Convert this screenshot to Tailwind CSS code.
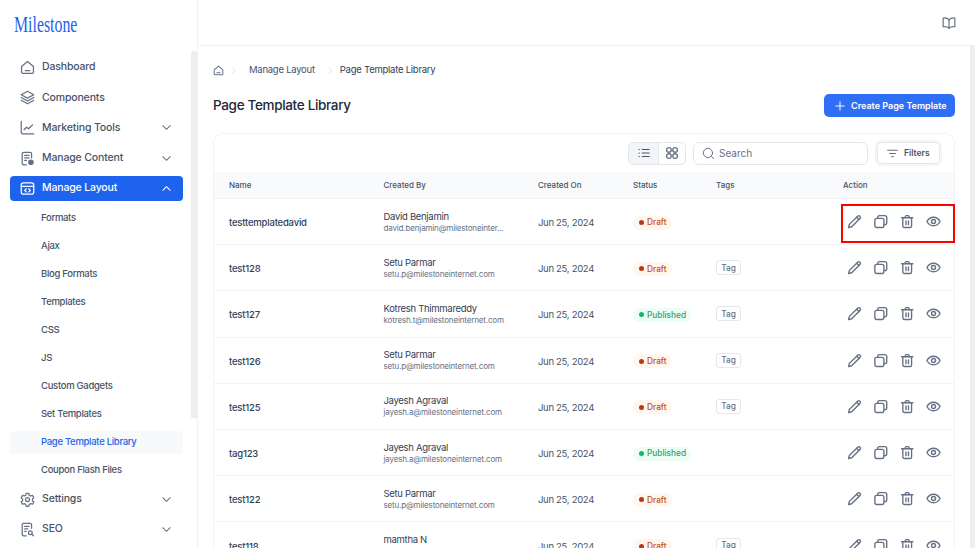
<!DOCTYPE html>
<html lang="en">
<head>
  <meta charset="UTF-8" />
  <title>Page Template Library</title>
  <script src="https://cdn.jsdelivr.net/npm/@tailwindcss/browser@4"></script>
</head>
<body class="h-[548px] overflow-hidden bg-white font-['Inter',sans-serif] text-[#344054]">
  <!-- shared icons -->
  <svg class="hidden">
    <symbol id="i-edit" viewBox="0 0 24 24" fill="none" stroke="currentColor" stroke-width="2.2" stroke-linejoin="round" stroke-linecap="round"><path d="M17.500 3.200a2.600 2.600 0 0 1 3.600 3.600L7.600 20.400 2.600 21.600l1.200-5z"/><path d="M15.500 5.200l3.600 3.600"/></symbol>
    <symbol id="i-copy" viewBox="0 0 24 24" fill="none" stroke="currentColor" stroke-width="2.2" stroke-linejoin="round" stroke-linecap="round"><rect x="2.500" y="7" width="14.500" height="14.500" rx="3"/><path d="M7 7V5.500a3 3 0 0 1 3-3h8.500a3 3 0 0 1 3 3V14a3 3 0 0 1-3 3H17"/></symbol>
    <symbol id="i-trash" viewBox="0 0 24 24" fill="none" stroke="currentColor" stroke-width="2.2" stroke-linejoin="round" stroke-linecap="round"><path d="M3 6h18"/><path d="M9 6V4a1.500 1.500 0 0 1 1.500-1.500h3A1.500 1.500 0 0 1 15 4v2"/><path d="M5 6v13a2.500 2.500 0 0 0 2.500 2.500h9A2.500 2.500 0 0 0 19 19V6"/><path d="M10 11v6M14 11v6"/></symbol>
    <symbol id="i-eye" viewBox="0 0 24 24" fill="none" stroke="currentColor" stroke-width="2.2" stroke-linejoin="round" stroke-linecap="round"><path d="M1.500 12C4 7.500 7.500 5.200 12 5.200s8 2.300 10.500 6.800c-2.500 4.500-6 6.800-10.500 6.800S4 16.500 1.500 12z"/><circle cx="12" cy="12" r="3.200"/></symbol>
    <symbol id="i-down" viewBox="0 0 12 12" fill="none" stroke="currentColor" stroke-width="1.100" stroke-linecap="round" stroke-linejoin="round"><path d="M2 4l4 4 4-4"/></symbol>
    <symbol id="i-crumb" viewBox="0 0 12 12" fill="none" stroke="currentColor" stroke-width="1" stroke-linecap="round" stroke-linejoin="round"><path d="M4 2l4 4-4 4"/></symbol>
    <symbol id="i-actions" viewBox="0 0 94 15"><use href="#i-edit" x="0" width="15" height="15"/><use href="#i-copy" x="26.300" width="15" height="15"/><use href="#i-trash" x="52.700" width="15" height="15"/><use href="#i-eye" x="79" width="15" height="15"/></symbol>
  </svg>

  <div class="flex h-full">
    <!-- sidebar -->
    <aside class="relative w-[198px] shrink-0 overflow-hidden border-r border-[#f0f1f3]">
      <div class="h-[52px] pl-[14px] pt-[9px]">
        <span class="inline-block origin-left scale-x-[0.66] font-['Liberation_Serif',serif] text-[24px] leading-[30px] text-[#1d63ed]">Milestone</span>
      </div>
      <div class="absolute right-0 top-[51px] h-[367px] w-[6px] rounded-t-[3px] bg-[#eceef2]"></div>
      <nav class="w-[183px] pl-[10px] text-[10.500px] font-medium tracking-[-0.15px] text-[#475467]">
        <a class="flex h-[30.400px] items-center gap-[7px] pl-[10px]">
          <svg class="size-[15px]" viewBox="0 0 24 24" fill="none" stroke="#667085" stroke-width="2" stroke-linejoin="round" stroke-linecap="round"><path d="M2.500 10.500 12 2.500l9.500 8V19a2.500 2.500 0 0 1-2.500 2.500H5A2.500 2.500 0 0 1 2.500 19z"/><path d="M8.500 17h7"/></svg>
          Dashboard
        </a>
        <a class="flex h-[30.400px] items-center gap-[7px] pl-[10px]">
          <svg class="size-[15px]" viewBox="0 0 24 24" fill="none" stroke="#667085" stroke-width="2" stroke-linejoin="round" stroke-linecap="round"><path d="M12 2 2 7.500 12 13l10-5.500z"/><path d="M2 12l10 5.500L22 12"/><path d="M2 16.500 12 22l10-5.500"/></svg>
          Components
        </a>
        <a class="flex h-[30.400px] items-center gap-[7px] pl-[10px] pr-[11px]">
          <svg class="size-[15px]" viewBox="0 0 24 24" fill="none" stroke="#667085" stroke-width="2" stroke-linejoin="round" stroke-linecap="round"><path d="M2 2v17a3 3 0 0 0 3 3h17"/><path d="M6.500 15.500l4-4 3 2.500 6.500-6"/></svg>
          Marketing Tools
          <svg class="ml-auto size-[11px] text-[#667085]"><use href="#i-down"/></svg>
        </a>
        <a class="flex h-[30.400px] items-center gap-[7px] pl-[10px] pr-[11px]">
          <svg class="size-[15px]" viewBox="0 0 24 24" fill="none" stroke="#667085" stroke-width="2" stroke-linejoin="round" stroke-linecap="round"><path d="M10 22H6a2.500 2.500 0 0 1-2.500-2.500v-15A2.500 2.500 0 0 1 6 2h10a2.500 2.500 0 0 1 2.500 2.500V11"/><path d="M7.500 7h7M7.500 11h7M7.500 15h3"/><circle cx="17.500" cy="18" r="3.500" fill="#667085"/></svg>
          Manage Content
          <svg class="ml-auto size-[11px] text-[#667085]"><use href="#i-down"/></svg>
        </a>
        <a class="mb-[3.500px] mt-[2px] flex h-[25px] items-center gap-[7px] rounded-[4px] bg-[#1d63ed] pl-[10px] pr-[11px] text-white">
          <svg class="size-[15px]" viewBox="0 0 24 24" fill="none" stroke="#fff" stroke-width="2" stroke-linejoin="round" stroke-linecap="round"><rect x="2" y="3" width="20" height="18" rx="3.500"/><path d="M2 8.500h20"/><path d="M10 12.500l-2.500 2.500 2.500 2.500M14 12.500l2.500 2.500-2.500 2.500"/></svg>
          Manage Layout
          <svg class="ml-auto size-[11px] rotate-180 text-white"><use href="#i-down"/></svg>
        </a>
        <div class="text-[9.500px] tracking-[-0.3px]">
          <a class="flex h-[28px] items-center pl-[31px]">Formats</a>
          <a class="flex h-[28px] items-center pl-[31px]">Ajax</a>
          <a class="flex h-[28px] items-center pl-[31px]">Blog Formats</a>
          <a class="flex h-[28px] items-center pl-[31px]">Templates</a>
          <a class="flex h-[28px] items-center pl-[31px]">CSS</a>
          <a class="flex h-[28px] items-center pl-[31px]">JS</a>
          <a class="flex h-[28px] items-center pl-[31px]">Custom Gadgets</a>
          <a class="flex h-[28px] items-center pl-[31px]">Set Templates</a>
          <a class="my-[2.500px] flex h-[23px] items-center rounded-[4px] bg-[#f8f9fb] pl-[31px] text-[#1d63ed]">Page Template Library</a>
          <a class="flex h-[28px] items-center pl-[31px]">Coupon Flash Files</a>
        </div>
        <a class="flex h-[30px] items-center gap-[7px] pl-[10px] pr-[11px]">
          <svg class="size-[15px]" viewBox="0 0 24 24" fill="none" stroke="#667085" stroke-width="2" stroke-linejoin="round" stroke-linecap="round"><circle cx="12" cy="12" r="3.200"/><path d="M10 2h4l.7 3 2.400 1.400 3-.9 2 3.500-2.200 2.100v2.800l2.200 2.100-2 3.500-3-.9-2.400 1.400-.7 3h-4l-.7-3-2.400-1.400-3 .9-2-3.500 2.200-2.100v-2.800L1.900 9l2-3.500 3 .9L9.300 5z"/></svg>
          Settings
          <svg class="ml-auto size-[11px] text-[#667085]"><use href="#i-down"/></svg>
        </a>
        <a class="flex h-[30px] items-center gap-[7px] pl-[10px] pr-[11px]">
          <svg class="size-[15px]" viewBox="0 0 24 24" fill="none" stroke="#667085" stroke-width="2" stroke-linejoin="round" stroke-linecap="round"><path d="M10 22H6a2.500 2.500 0 0 1-2.500-2.500v-15A2.500 2.500 0 0 1 6 2h10a2.500 2.500 0 0 1 2.500 2.500V10"/><path d="M7.500 7h7M7.500 11h5M7.500 15h2"/><circle cx="16.500" cy="17" r="3"/><path d="M19 19.500l2.500 2.500"/></svg>
          SEO
          <svg class="ml-auto size-[11px] text-[#667085]"><use href="#i-down"/></svg>
        </a>
      </nav>
    </aside>

    <div class="min-w-0 flex-1">
      <!-- top bar -->
      <header class="flex h-[46px] items-center justify-end border-b border-[#f0f1f3] pr-[19px]">
        <svg class="size-[14px] text-[#667085]" viewBox="0 0 24 24" fill="none" stroke="currentColor" stroke-width="2" stroke-linejoin="round" stroke-linecap="round"><path d="M12 6.500C10 4 6 3 2 3.500v15c4-.5 8 .5 10 2.500 2-2 6-3 10-2.500v-15C18 3 14 4 12 6.500z"/><path d="M12 6.500V21"/></svg>
      </header>

      <div class="relative h-[502px] overflow-hidden pl-[15px] pr-[20px]">
        <div class="absolute right-0 top-0 h-full w-[5px] bg-[#eceef2]"></div>

        <!-- breadcrumb -->
        <div class="flex h-[48px] items-center pt-[1px] text-[9.500px] tracking-[-0.25px] text-[#475467]">
          <svg class="size-[11px] text-[#667085]" viewBox="0 0 24 24" fill="none" stroke="currentColor" stroke-width="2.200" stroke-linejoin="round" stroke-linecap="round"><path d="M2.500 10.500 12 2.500l9.500 8V19a2.500 2.500 0 0 1-2.500 2.500H5A2.500 2.500 0 0 1 2.500 19z"/><path d="M8.500 17h7"/></svg>
          <svg class="ml-[5px] mr-[11px] size-[9px] text-[#d0d5dd]"><use href="#i-crumb"/></svg>
          <span>Manage Layout</span>
          <svg class="ml-[11px] mr-[5px] size-[9px] text-[#d0d5dd]"><use href="#i-crumb"/></svg>
          <span class="text-[#344054]">Page Template Library</span>
        </div>

        <!-- title row -->
        <div class="flex h-[23px] items-center justify-between">
          <h1 class="text-[13.500px] font-medium tracking-[-0.33px] text-[#1d2939]">Page Template Library</h1>
          <button class="flex h-[23px] w-[131px] items-center gap-[6px] rounded-[5px] bg-[#2f6ff6] pl-[11px] text-[9px] font-semibold whitespace-nowrap text-white">
            <svg class="size-[10px]" viewBox="0 0 12 12" fill="none" stroke="#fff" stroke-width="1.200" stroke-linecap="round"><path d="M6 1v10M1 6h10"/></svg>
            Create Page Template
          </button>
        </div>

        <!-- card -->
        <div class="mt-[16px] rounded-t-[10px] border border-b-0 border-[#f2f3f5]">
          <div class="flex h-[38px] items-center justify-end pr-[14px]">
            <div class="flex h-[23px] w-[58px] overflow-hidden rounded-[5px] border border-[#e4e7ec]">
              <span class="flex w-[29px] items-center justify-center bg-[#f2f4f7] text-[#475467]">
                <svg class="size-[14px]" viewBox="0 0 24 24" fill="none" stroke="currentColor" stroke-width="2" stroke-linecap="round"><path d="M9 6h12M9 12h12M9 18h12M3.500 6h.5M3.500 12h.5M3.500 18h.5"/></svg>
              </span>
              <span class="flex flex-1 items-center justify-center border-l border-[#e4e7ec] text-[#475467]">
                <svg class="size-[14px]" viewBox="0 0 24 24" fill="none" stroke="currentColor" stroke-width="2"><rect x="3" y="3" width="7.500" height="7.500" rx="2.500"/><rect x="13.500" y="3" width="7.500" height="7.500" rx="2.500"/><rect x="3" y="13.500" width="7.500" height="7.500" rx="2.500"/><rect x="13.500" y="13.500" width="7.500" height="7.500" rx="2.500"/></svg>
              </span>
            </div>
            <div class="ml-[7px] flex h-[23px] w-[175px] items-center gap-[4px] rounded-[6px] border border-[#e4e7ec] pl-[8px] text-[10px] text-[#667085]">
              <svg class="size-[13px]" viewBox="0 0 24 24" fill="none" stroke="currentColor" stroke-width="1.800" stroke-linecap="round"><circle cx="11" cy="11" r="8.500"/><path d="M17.500 17.500 21.500 21.500"/></svg>
              Search
            </div>
            <button class="ml-[9px] flex h-[22px] w-[63px] items-center gap-[5px] rounded-[5px] border border-[#e4e7ec] pl-[8px] text-[8.500px] font-semibold text-[#475467] shadow-[0_0_0_2px_#f2f4f7]">
              <svg class="size-[13px] text-[#667085]" viewBox="0 0 24 24" fill="none" stroke="currentColor" stroke-width="2" stroke-linecap="round"><path d="M3 6h18M6.500 12h11M10 18h4"/></svg>
              Filters
            </button>
          </div>

          <!-- table -->
          <div class="grid h-[27px] grid-cols-[154.500px_154.500px_95px_83px_127px_1fr] items-center border-b border-[#f2f3f5] bg-[#f9fafb] pl-[15px] text-[8px] font-medium text-[#475467]">
            <span>Name</span><span>Created By</span><span>Created On</span><span>Status</span><span>Tags</span><span>Action</span>
          </div>

          <div class="relative grid h-[46.200px] grid-cols-[154.500px_154.500px_95px_83px_127px_1fr] items-center border-b border-[#f2f3f5] pl-[15px]">
            <span class="mt-[3px] text-[9.500px] font-medium tracking-[-0.2px] text-[#344054]">testtemplatedavid</span>
            <div><p class="text-[9.500px] leading-[13px] tracking-[-0.3px] text-[#344054]">David Benjamin</p><p class="text-[8px] leading-[11px] tracking-[-0.15px] text-[#667085]">david.benjamin@milestoneinter...</p></div>
            <span class="mt-[3px] text-[9.500px] tracking-[-0.3px] text-[#475467]">Jun 25, 2024</span>
            <div class="mt-[2px] flex"><span class="inline-flex h-[14px] items-center gap-[3px] rounded-full bg-[#fff6ed] pl-[6px] pr-[5px] text-[8.300px] font-medium text-[#c4520f]"><i class="size-[5px] rounded-full bg-[#b93815]"></i>Draft</span></div>
            <div></div>
            <div class="flex pl-[4px] text-[#667085]"><svg class="h-[15px] w-[94px]"><use href="#i-actions"/></svg></div>
            <div class="absolute -right-px top-[5px] h-[39px] w-[114px] border-2 border-[#ff0000]"></div>
          </div>

          <div class="grid h-[46.200px] grid-cols-[154.500px_154.500px_95px_83px_127px_1fr] items-center border-b border-[#f2f3f5] pl-[15px]">
            <span class="mt-[3px] text-[9.500px] font-medium tracking-[-0.2px] text-[#344054]">test128</span>
            <div><p class="text-[9.500px] leading-[13px] tracking-[-0.3px] text-[#344054]">Setu Parmar</p><p class="text-[8px] leading-[11px] tracking-[-0.15px] text-[#667085]">setu.p@milestoneinternet.com</p></div>
            <span class="mt-[3px] text-[9.500px] tracking-[-0.3px] text-[#475467]">Jun 25, 2024</span>
            <div class="mt-[2px] flex"><span class="inline-flex h-[14px] items-center gap-[3px] rounded-full bg-[#fff6ed] pl-[6px] pr-[5px] text-[8.300px] font-medium text-[#c4520f]"><i class="size-[5px] rounded-full bg-[#b93815]"></i>Draft</span></div>
            <div class="flex"><span class="inline-flex h-[15px] w-[25px] items-center justify-center rounded-[3px] border border-[#e4e7ec] text-[8.300px] font-medium text-[#667085]">Tag</span></div>
            <div class="flex pl-[4px] text-[#667085]"><svg class="h-[15px] w-[94px]"><use href="#i-actions"/></svg></div>
          </div>

          <div class="grid h-[46.200px] grid-cols-[154.500px_154.500px_95px_83px_127px_1fr] items-center border-b border-[#f2f3f5] pl-[15px]">
            <span class="mt-[3px] text-[9.500px] font-medium tracking-[-0.2px] text-[#344054]">test127</span>
            <div><p class="text-[9.500px] leading-[13px] tracking-[-0.3px] text-[#344054]">Kotresh Thimmareddy</p><p class="text-[8px] leading-[11px] tracking-[-0.15px] text-[#667085]">kotresh.t@milestoneinternet.com</p></div>
            <span class="mt-[3px] text-[9.500px] tracking-[-0.3px] text-[#475467]">Jun 25, 2024</span>
            <div class="mt-[2px] flex"><span class="inline-flex h-[14px] items-center gap-[3px] rounded-full bg-[#ecfdf3] pl-[6px] pr-[5px] text-[8.300px] font-medium text-[#3a9d6e]"><i class="size-[5px] rounded-full bg-[#12b76a]"></i>Published</span></div>
            <div class="flex"><span class="inline-flex h-[15px] w-[25px] items-center justify-center rounded-[3px] border border-[#e4e7ec] text-[8.300px] font-medium text-[#667085]">Tag</span></div>
            <div class="flex pl-[4px] text-[#667085]"><svg class="h-[15px] w-[94px]"><use href="#i-actions"/></svg></div>
          </div>

          <div class="grid h-[46.200px] grid-cols-[154.500px_154.500px_95px_83px_127px_1fr] items-center border-b border-[#f2f3f5] pl-[15px]">
            <span class="mt-[3px] text-[9.500px] font-medium tracking-[-0.2px] text-[#344054]">test126</span>
            <div><p class="text-[9.500px] leading-[13px] tracking-[-0.3px] text-[#344054]">Setu Parmar</p><p class="text-[8px] leading-[11px] tracking-[-0.15px] text-[#667085]">setu.p@milestoneinternet.com</p></div>
            <span class="mt-[3px] text-[9.500px] tracking-[-0.3px] text-[#475467]">Jun 25, 2024</span>
            <div class="mt-[2px] flex"><span class="inline-flex h-[14px] items-center gap-[3px] rounded-full bg-[#fff6ed] pl-[6px] pr-[5px] text-[8.300px] font-medium text-[#c4520f]"><i class="size-[5px] rounded-full bg-[#b93815]"></i>Draft</span></div>
            <div class="flex"><span class="inline-flex h-[15px] w-[25px] items-center justify-center rounded-[3px] border border-[#e4e7ec] text-[8.300px] font-medium text-[#667085]">Tag</span></div>
            <div class="flex pl-[4px] text-[#667085]"><svg class="h-[15px] w-[94px]"><use href="#i-actions"/></svg></div>
          </div>

          <div class="grid h-[46.200px] grid-cols-[154.500px_154.500px_95px_83px_127px_1fr] items-center border-b border-[#f2f3f5] pl-[15px]">
            <span class="mt-[3px] text-[9.500px] font-medium tracking-[-0.2px] text-[#344054]">test125</span>
            <div><p class="text-[9.500px] leading-[13px] tracking-[-0.3px] text-[#344054]">Jayesh Agraval</p><p class="text-[8px] leading-[11px] tracking-[-0.15px] text-[#667085]">jayesh.a@milestoneinternet.com</p></div>
            <span class="mt-[3px] text-[9.500px] tracking-[-0.3px] text-[#475467]">Jun 25, 2024</span>
            <div class="mt-[2px] flex"><span class="inline-flex h-[14px] items-center gap-[3px] rounded-full bg-[#fff6ed] pl-[6px] pr-[5px] text-[8.300px] font-medium text-[#c4520f]"><i class="size-[5px] rounded-full bg-[#b93815]"></i>Draft</span></div>
            <div class="flex"><span class="inline-flex h-[15px] w-[25px] items-center justify-center rounded-[3px] border border-[#e4e7ec] text-[8.300px] font-medium text-[#667085]">Tag</span></div>
            <div class="flex pl-[4px] text-[#667085]"><svg class="h-[15px] w-[94px]"><use href="#i-actions"/></svg></div>
          </div>

          <div class="grid h-[46.200px] grid-cols-[154.500px_154.500px_95px_83px_127px_1fr] items-center border-b border-[#f2f3f5] pl-[15px]">
            <span class="mt-[3px] text-[9.500px] font-medium tracking-[-0.2px] text-[#344054]">tag123</span>
            <div><p class="text-[9.500px] leading-[13px] tracking-[-0.3px] text-[#344054]">Jayesh Agraval</p><p class="text-[8px] leading-[11px] tracking-[-0.15px] text-[#667085]">jayesh.a@milestoneinternet.com</p></div>
            <span class="mt-[3px] text-[9.500px] tracking-[-0.3px] text-[#475467]">Jun 25, 2024</span>
            <div class="mt-[2px] flex"><span class="inline-flex h-[14px] items-center gap-[3px] rounded-full bg-[#ecfdf3] pl-[6px] pr-[5px] text-[8.300px] font-medium text-[#3a9d6e]"><i class="size-[5px] rounded-full bg-[#12b76a]"></i>Published</span></div>
            <div></div>
            <div class="flex pl-[4px] text-[#667085]"><svg class="h-[15px] w-[94px]"><use href="#i-actions"/></svg></div>
          </div>

          <div class="grid h-[46.200px] grid-cols-[154.500px_154.500px_95px_83px_127px_1fr] items-center border-b border-[#f2f3f5] pl-[15px]">
            <span class="mt-[3px] text-[9.500px] font-medium tracking-[-0.2px] text-[#344054]">test122</span>
            <div><p class="text-[9.500px] leading-[13px] tracking-[-0.3px] text-[#344054]">Setu Parmar</p><p class="text-[8px] leading-[11px] tracking-[-0.15px] text-[#667085]">setu.p@milestoneinternet.com</p></div>
            <span class="mt-[3px] text-[9.500px] tracking-[-0.3px] text-[#475467]">Jun 25, 2024</span>
            <div class="mt-[2px] flex"><span class="inline-flex h-[14px] items-center gap-[3px] rounded-full bg-[#fff6ed] pl-[6px] pr-[5px] text-[8.300px] font-medium text-[#c4520f]"><i class="size-[5px] rounded-full bg-[#b93815]"></i>Draft</span></div>
            <div></div>
            <div class="flex pl-[4px] text-[#667085]"><svg class="h-[15px] w-[94px]"><use href="#i-actions"/></svg></div>
          </div>

          <div class="grid h-[46.200px] grid-cols-[154.500px_154.500px_95px_83px_127px_1fr] items-center pl-[15px]">
            <span class="mt-[3px] text-[9.500px] font-medium tracking-[-0.2px] text-[#344054]">test118</span>
            <div><p class="pb-[11px] text-[9.500px] leading-[13px] tracking-[-0.3px] text-[#344054]">mamtha N</p></div>
            <span class="mt-[3px] text-[9.500px] tracking-[-0.3px] text-[#475467]">Jun 25, 2024</span>
            <div class="mt-[2px] flex"><span class="inline-flex h-[14px] items-center gap-[3px] rounded-full bg-[#fff6ed] pl-[6px] pr-[5px] text-[8.300px] font-medium text-[#c4520f]"><i class="size-[5px] rounded-full bg-[#b93815]"></i>Draft</span></div>
            <div class="flex"><span class="inline-flex h-[15px] w-[25px] items-center justify-center rounded-[3px] border border-[#e4e7ec] text-[8.300px] font-medium text-[#667085]">Tag</span></div>
            <div class="flex pl-[4px] text-[#667085]"><svg class="h-[15px] w-[94px]"><use href="#i-actions"/></svg></div>
          </div>
        </div>
      </div>
    </div>
  </div>
</body>
</html>
